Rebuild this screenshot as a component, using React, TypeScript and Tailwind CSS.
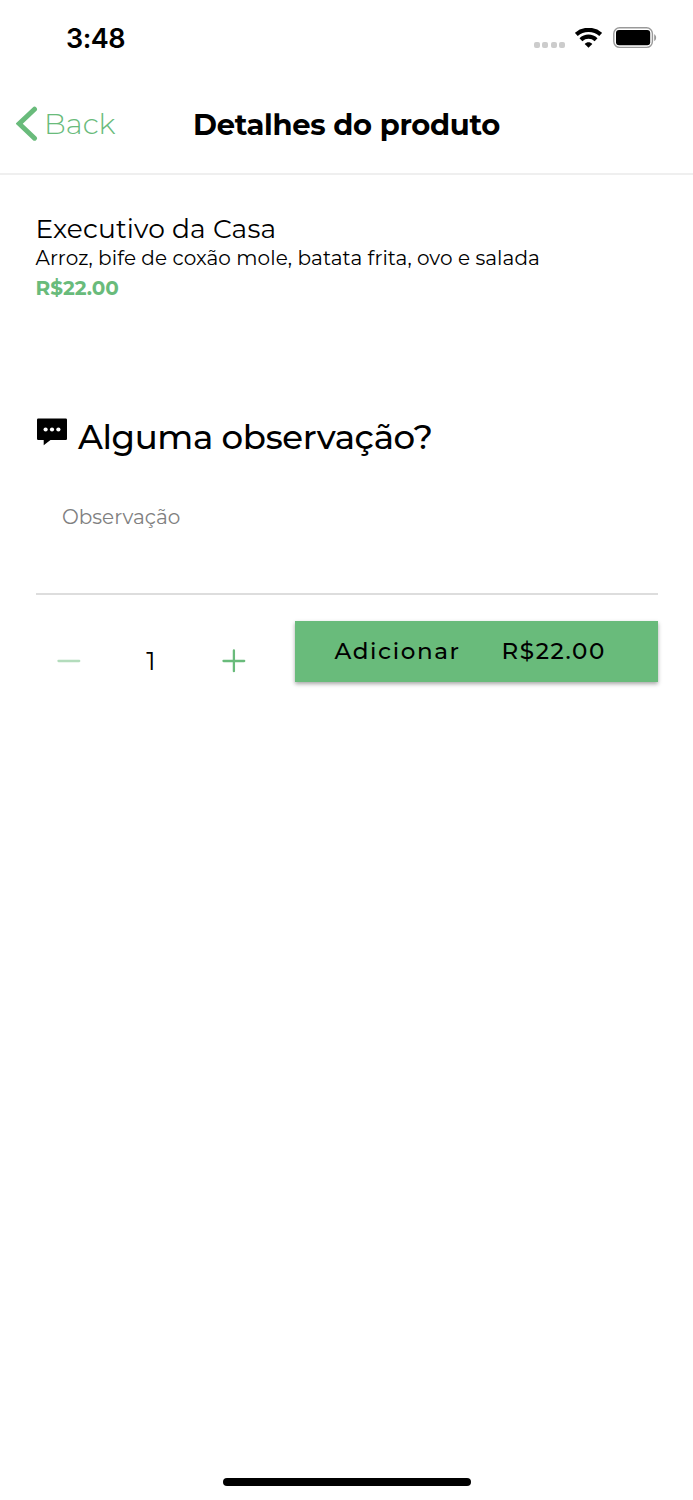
import { useState } from "react";

const PRICE = 22;

function StatusBar() {
  return (
    <div className="flex h-[76px] items-center justify-between pl-[66px] pr-9">
      <span className="font-['Inter',sans-serif] text-[27px] leading-none font-semibold tracking-[-0.5px]">3:48</span>
      <div className="flex items-center">
        <div className="mt-[13px] mr-[10px] flex gap-[2.4px]">
          {[0, 1, 2, 3].map((dot) => (
            <span key={dot} className="h-[6px] w-[6px] rounded-[2px] bg-[#cccccc]" />
          ))}
        </div>
        <svg className="mr-[11px] h-[20px] w-[27px]" viewBox="0 0 27 20" fill="none">
          <path d="M1.300 6.400C8 .4 19 .4 25.700 6.400" stroke="black" strokeWidth="4.300" />
          <path d="M5.900 11.700C10.300 7.700 16.700 7.700 21.100 11.700" stroke="black" strokeWidth="4.200" />
          <path d="M13.500 19.800L9.700 16C11.700 13.700 15.300 13.700 17.300 16Z" fill="black" />
        </svg>
        <svg className="h-[22px] w-[44px]" viewBox="0 0 44 22" fill="none">
          <rect x=".8" y=".8" width="38.600" height="19.600" rx="5.800" stroke="#999999" strokeWidth="1.400" />
          <rect x="3" y="3" width="34.200" height="15.200" rx="3" fill="black" />
          <path d="M41.200 7.200C43.800 8.400 43.800 12.800 41.200 14Z" fill="#999999" />
        </svg>
      </div>
    </div>
  );
}

function Header() {
  return (
    <header className="grid h-[99px] grid-cols-[193px_1fr_193px] items-center border-b-2 border-[#efefef] pb-[2px]">
      <button className="flex items-center pl-4 text-[#69bb7b]">
        <svg className="h-[36px] w-[22px]" viewBox="0 0 22 36" fill="none">
          <path d="M18.500 3.200L3.200 17.700L18.500 32.200" stroke="currentColor" strokeWidth="5" strokeLinecap="round" />
        </svg>
        <span className="ml-[6px] text-[29px] leading-9 font-[350]">Back</span>
      </button>
      <h1 className="pt-[2px] text-[29px] leading-9 font-bold tracking-[-0.3px] whitespace-nowrap">
        Detalhes do produto
      </h1>
    </header>
  );
}

export default function App() {
  const [quantity, setQuantity] = useState(1);
  const total = `R$${(PRICE * quantity).toFixed(2)}`;

  return (
    <div className="flex h-[1500px] w-full flex-col overflow-hidden bg-white font-['Montserrat','Inter',sans-serif] text-black">
      <StatusBar />
      <Header />

      <main className="flex-1 px-[35.5px] pt-[38px]">
        <h2 className="text-[26.500px] leading-[31px] tracking-[0.130px]">Executivo da Casa</h2>
        <p className="text-[20px] leading-7 tracking-[0.080px] whitespace-nowrap">
          Arroz, bife de coxão mole, batata frita, ovo e salada
        </p>
        <p className="text-[20px] leading-8 font-bold text-[#69bb7b]">R$22.00</p>

        <div className="mt-[109px] flex h-12 items-center">
          <svg className="mb-[10px] ml-[1.5px] h-[28px] w-[30px]" viewBox="0 0 30 28">
            <path d="M1.200 .5H28.800Q30 .5 30 1.700V20.800Q30 22 28.800 22H13.500L6.700 27.300V22H1.200Q0 22 0 20.800V1.700Q0 .5 1.200 .5Z" />
            <g fill="white">
              <circle cx="8.600" cy="11.500" r="2.100" />
              <circle cx="15" cy="11.500" r="2.100" />
              <circle cx="21.400" cy="11.500" r="2.100" />
            </g>
          </svg>
          <h3 className="ml-[11px] text-[34px] leading-[48px] font-medium tracking-[-0.380px] whitespace-nowrap">Alguma observação?</h3>
        </div>

        <textarea
          placeholder="Observação"
          className="block h-[134px] w-full resize-none border-b-2 border-[#dddddd] pt-[42px] pl-[26.500px] text-[20px] leading-7 outline-none placeholder:text-[#808080]"
        />

        <div className="mt-[26px] flex h-[61px]">
          <div className="mt-[25px] flex h-[30px] w-[259px] items-center text-[#69bb7b]">
            <button
              className="ml-[21px] disabled:opacity-50"
              disabled={quantity === 1}
              onClick={() => setQuantity(quantity - 1)}
            >
              <svg className="h-6 w-6" viewBox="0 0 24 24" fill="none">
                <path d="M1.500 12H22.200" stroke="currentColor" strokeWidth="2.300" strokeLinecap="round" />
              </svg>
            </button>
            <span className="w-[141px] text-center text-[26px] leading-[30px] text-black">{quantity}</span>
            <button onClick={() => setQuantity(quantity + 1)}>
              <svg className="h-6 w-6" viewBox="0 0 24 24" fill="none">
                <path d="M1.500 12H22.200M11.900 1.500V22.200" stroke="currentColor" strokeWidth="2.300" strokeLinecap="round" />
              </svg>
            </button>
          </div>
          <button className="flex flex-1 items-center bg-[#69bb7b] pl-10 text-[23px] font-medium tracking-[1.600px] shadow-[0_2px_4px_rgba(0,0,0,0.35)]">
            <span className="w-[167px] text-left">Adicionar</span>
            <span>{total}</span>
          </button>
        </div>
      </main>

      <div className="mx-auto mb-[14px] h-[8px] w-[248px] rounded-full bg-black" />
    </div>
  );
}
